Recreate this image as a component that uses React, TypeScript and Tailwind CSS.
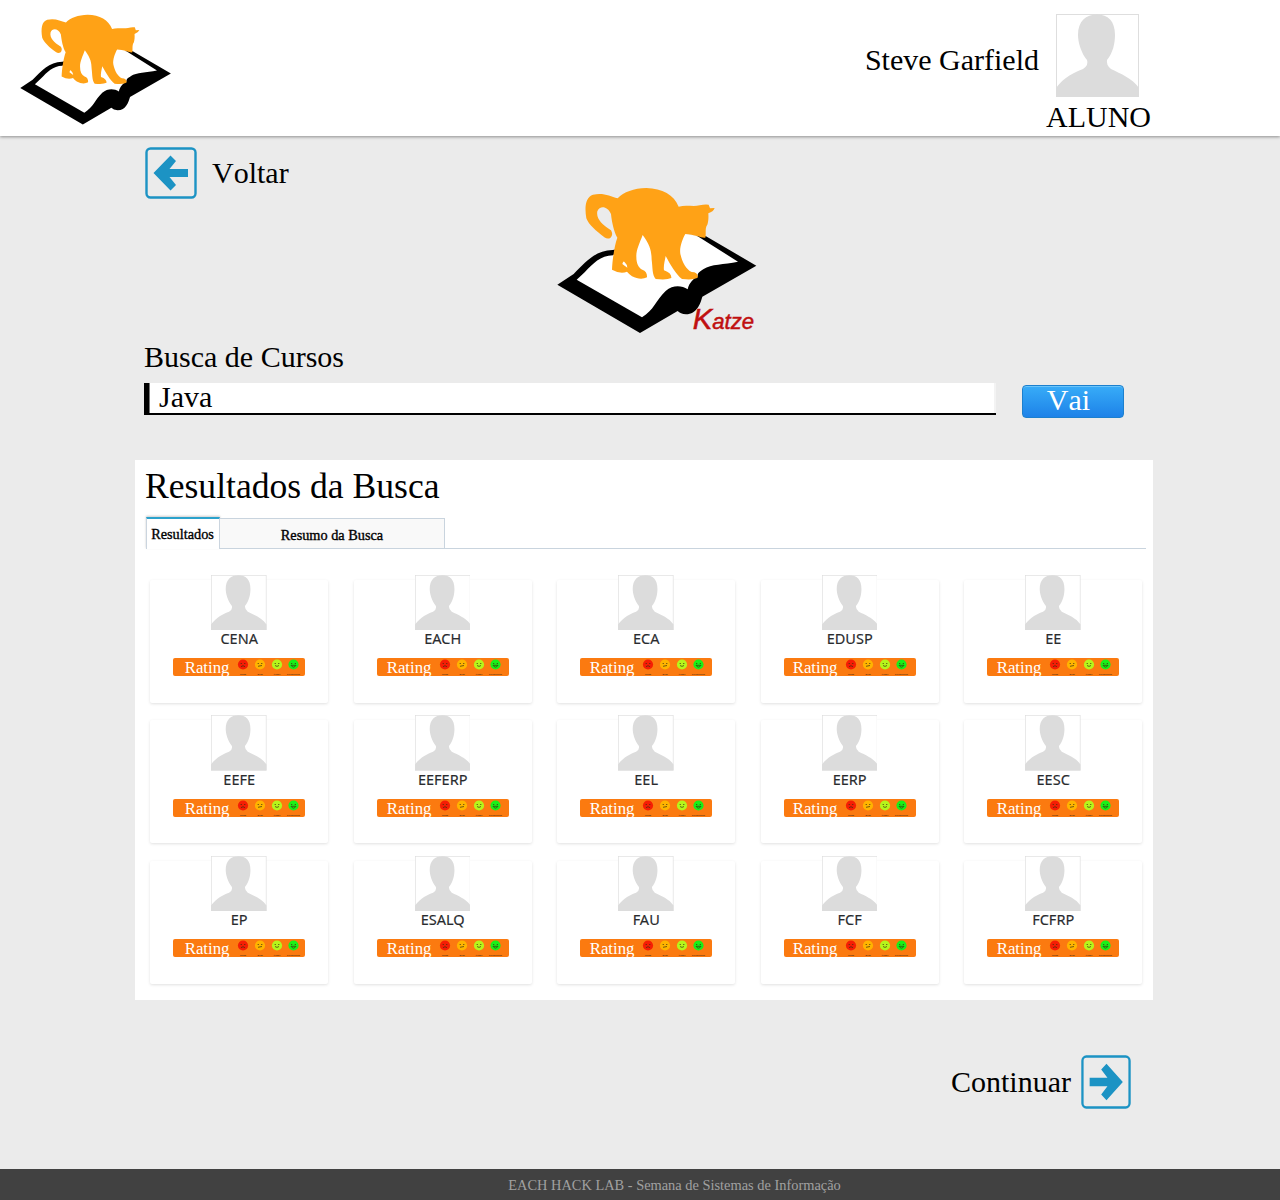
import React from 'react';

const SERIF = 'font-["Liberation_Serif",serif]';

function Logo({ className, caption }: { className: string; caption?: boolean }) {
  return (
    <svg viewBox={caption ? '50 50 600 480' : '50 50 600 440'} className={className}>
      <path fill="#000" d="M51 343 L100 311 C135 275 165 240 217 239 L470 196 L497 198 L648 286 L486 379 C480 400 470 431 437 432 Q420 431 412 422 L299 488 Z" />
      <path fill="#fff" d="M109 328 L133 306 C158 280 180 256 218 255 L300 180 L430 190 L472 198 L593 274 C550 283 512 281 490 296 C480 303 471 307 472 317 C460 325 446 337 442 357 C424 345 398 343 376 362 C347 390 340 420 305 441 Z" />
      <path fill="#ffa216" d="M232 84 C250 65 280 54 318 53 C366 54 401 74 415 109 C436 103 460 110 478 105 Q494 101 505 103 L509 114 L523 113 Q519 124 504 129 C505 143 504 154 501 163 C493 173 498 190 495 202 Q484 203 473 198 C460 194 447 191 435 191 C426 207 417 232 420 250 C425 275 438 298 454 305 Q472 305 473 321 Q462 330 425 326 C408 314 389 281 376 257 C373 273 369 288 371 300 Q394 308 393 323 Q379 330 346 326 C335 313 337 289 334 268 C333 243 331 227 307 194 C299 216 287 239 288 259 C288 279 294 292 306 298 Q321 303 320 321 C309 327 292 327 275 318 Q267 312 260 304 Q240 312 215 298 C216 271 222 226 231 202 C220 184 214 151 212 131 C201 106 178 105 171 123 C167 145 184 161 212 180 Q220 193 210 203 Q201 207 192 201 C166 181 145 163 138 144 C132 108 136 80 158 73 C190 66 209 78 232 84 Z" />
      <path fill="#fff" d="M246 281 Q249 269 253 276 Q260 282 261 292 Z" />
      {caption && (
        <text x="457" y="477" fill="#c01010" stroke="#c01010" strokeWidth="1.5" fontFamily="Liberation Sans, sans-serif" fontStyle="italic" fontSize="68" textLength="184" lengthAdjust="spacingAndGlyphs">
          <tspan fontSize="90">K</tspan>atze
        </text>
      )}
    </svg>
  );
}

function Avatar({ className }: { className: string }) {
  return (
    <svg viewBox="0 0 83 83" className={className}>
      <rect x="0.5" y="0.5" width="82" height="82" fill="#fff" stroke="#dedede" />
      <path fill="#dcdcdc" d="M0 83 V74 C8 63 19 58 27 55 Q33 51 31 46 C25 39 22 28 22 21 C22 7 30 0.5 41 0.5 C52 0.5 59 7 59 21 C59 29 57 39 51 46 Q50 51 55 55 C65 60 76 64 83 74 V83 Z" />
    </svg>
  );
}

function ArrowBox({ className, flip }: { className: string; flip?: boolean }) {
  return (
    <svg viewBox="0 0 52 52" preserveAspectRatio="none" className={className}>
      <rect x="1.500" y="1.500" width="49" height="49" rx="4" fill="none" stroke="#1c93c4" strokeWidth="2.400" />
      <path fill="#1c93c4" transform={flip ? 'translate(52 0) scale(-1 1)' : undefined} d="M8.500 26 L25.500 8.500 L31 14 L24.500 22 H43 V30 H24.500 L31 38 L25.500 43.500 Z" />
    </svg>
  );
}

const faces = [
  { x: 0, color: '#f51d05', caption: 'RUIM', mouth: 'M-2 2.200 Q0 0.200 2 2.200', w: 6 },
  { x: 17, color: '#ffb400', caption: 'BOM', mouth: 'M-2 1.800 L2 1', w: 5 },
  { x: 34, color: '#b5f51b', caption: 'ÓTIMO', mouth: 'M-2 1 Q0 2.800 2 1', w: 7 },
  { x: 50.5, color: '#18f018', caption: 'EXCELENTE', mouth: 'M-2.500 0.800 Q0 4.500 2.500 0.800 Z', w: 13 },
];

function Rating({ inset }: { inset: number }) {
  return (
    <div className="mt-[11px] flex h-[18px] w-[132px] rounded-[2px] bg-[#fb7a10]" style={{ paddingLeft: inset }}>
      <span className={`${SERIF} w-[50px] text-[16.8px] leading-[19px] text-white`}>Rating</span>
      <svg viewBox="-8 0 70 18" className="h-[18px] w-[70px]">
        {faces.map((f) => (
          <g key={f.x}>
            <g transform={`translate(${f.x} 6.500)`}>
              <circle r="5.1" fill={f.color} />
              <circle cx="-1.800" cy="-1" r="0.6" fill="#3b3210" />
              <circle cx="1.800" cy="-1" r="0.6" fill="#3b3210" />
              <path d={f.mouth} fill="none" stroke="#3b3210" strokeWidth="0.7" />
            </g>
            <text x={f.x} y="16.800" textAnchor="middle" fontSize="2.2" fontWeight="bold" fontFamily="Liberation Sans, sans-serif" fill="#5b3510" textLength={f.w} lengthAdjust="spacingAndGlyphs">
              {f.caption}
            </text>
          </g>
        ))}
      </svg>
    </div>
  );
}

const units = ['CENA', 'EACH', 'ECA', 'EDUSP', 'EE', 'EEFE', 'EEFERP', 'EEL', 'EERP', 'EESC', 'EP', 'ESALQ', 'FAU', 'FCF', 'FCFRP'];
const insets = [11.5, 10, 9.5, 9, 9.5];

export default function App() {
  return (
    <div className={`${SERIF} flex h-[1200px] w-[1280px] flex-col bg-[#ebebeb] text-[30px] leading-[34px] text-black`}>
      <header className="flex h-[136px] shrink-0 justify-between bg-white shadow-[0_1px_3px_rgba(0,0,0,0.4)]">
        <Logo className="mt-[14px] ml-[20px] h-[111px] w-[151.4px]" />
        <div className="mr-[129px] flex">
          <span className="mt-[43px]">Steve Garfield</span>
          <div className="ml-[7px] flex w-[105px] flex-col items-center pt-[14px]">
            <Avatar className="mr-[2px] h-[83px] w-[83px]" />
            <span className="mt-[3px]">ALUNO</span>
          </div>
        </div>
      </header>

      <main className="ml-[135px] flex w-[1018px] grow flex-col">
        <button className="mt-[11px] ml-[10px] flex h-[52px] items-center gap-[15px] self-start">
          <ArrowBox className="h-[52px] w-[52px]" />
          <span className="[font-kerning:none]">Voltar</span>
        </button>
        <Logo caption className="-mt-[12px] ml-[421.5px] h-[160px] w-[200px] shrink-0" />
        <label htmlFor="q" className="-mt-[7px] ml-[9px] self-start">Busca de Cursos</label>
        <div className="mt-[9px] ml-[9px] flex h-[35px] items-start">
          <input id="q" defaultValue="Java" className="h-[32px] w-[852px] border-b-2 border-l-[5px] border-black bg-white pb-[2px] pl-[10px] shadow-[inset_1px_0_0_#777,inset_-2px_0_0_#f3f3f3] outline-none" />
          <button className="mt-[2px] ml-[26px] flex h-[33px] w-[102px] justify-center rounded-[4px] border border-[#1c80ce] bg-linear-to-b from-[#38acf8] to-[#1e82e8] pr-[9px] text-[30px] leading-[27px] text-white shadow-[inset_0_1px_0_#6cc4fa] [font-kerning:none]">
            Vai
          </button>
        </div>

        <section className="mt-[42px] h-[540px] bg-white">
          <h1 className="h-[46px] pt-[6px] pl-[10px] text-[35.6px] leading-[40px]">Resultados da Busca</h1>
          <div className="mt-[10px] ml-[10px] flex h-[33px] w-[1001px] items-end text-[14.300px] leading-[16px]">
            <div className="ml-px flex h-[32px] w-[74px] items-center justify-center border-x border-t-2 border-[#cbd5df] border-t-[#2ba2cc] bg-white pr-px shadow-[0_-1px_2px_rgba(0,0,0,0.2)] [-webkit-text-stroke:0.35px_#000]">Resultados</div>
            <div className="flex h-[31px] w-[225px] items-center justify-center border-t border-r border-b border-[#c9d4de] bg-[#f9f9f9] pt-[2px] [-webkit-text-stroke:0.35px_#000]">Resumo da Busca</div>
            <div className="h-px grow bg-[#c9d4de]" />
          </div>
          <div className="mt-[30.800px] ml-[15.200px] grid w-max grid-cols-[repeat(5,178px)] gap-x-[25.500px] gap-y-[17.500px]">
            {units.map((name, i) => (
              <article key={name} className="flex h-[123px] flex-col items-center rounded-[2px] bg-white shadow-[0_1px_3px_rgba(0,0,0,0.12)]">
                <Avatar className="-mt-[5px] h-[55.500px] w-[55.500px] shrink-0" />
                <span className='-mt-px font-["Noto_Sans",sans-serif] text-[14.500px] leading-[18px] text-[#292b2e] [-webkit-text-stroke:0.15px_#292b2e]'>{name}</span>
                <Rating inset={insets[i % 5]} />
              </article>
            ))}
          </div>
        </section>

        <button className="mt-[55px] mr-[22px] flex h-[54px] items-center gap-[10px] self-end">
          <span>Continuar</span>
          <ArrowBox flip className="h-[54px] w-[50px]" />
        </button>
      </main>

      <footer className="flex h-[31px] shrink-0 items-center justify-center bg-[#414141] pl-[69px] text-[14.400px] leading-[16px] text-[#a0a0a0]">
        EACH HACK LAB - Semana de Sistemas de Informação
      </footer>
    </div>
  );
}
